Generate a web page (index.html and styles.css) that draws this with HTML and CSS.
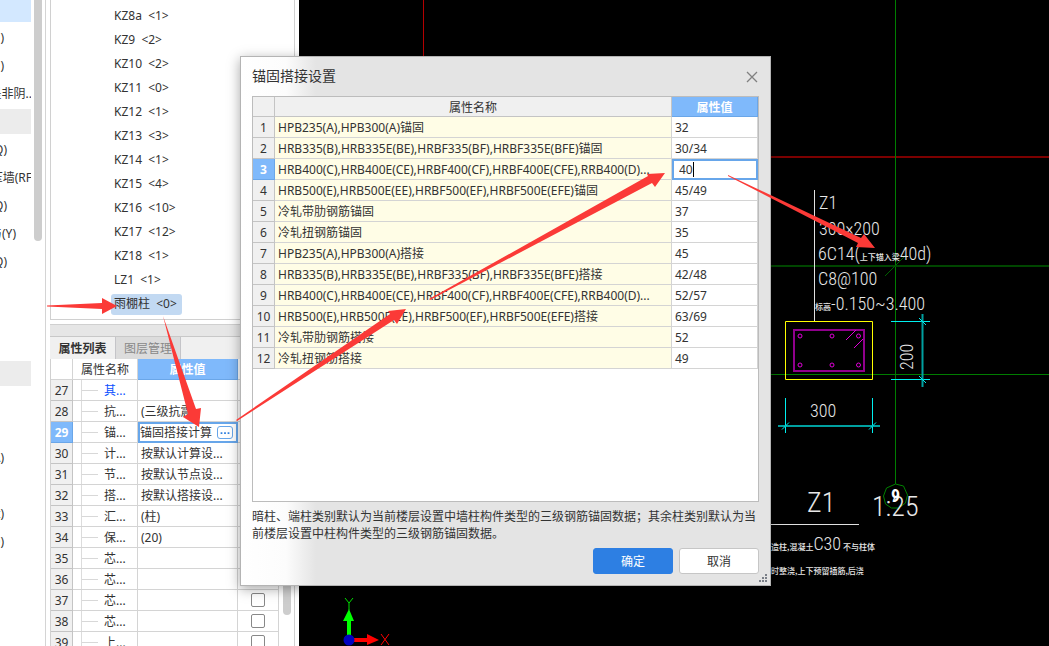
FILE: index.html
```html
<!DOCTYPE html>
<html lang="zh-CN">
<head>
<meta charset="utf-8">
<meta name="viewport" content="width=device-width, initial-scale=1">
<title>锚固搭接设置</title>
<link rel="stylesheet" href="styles.css">
</head>
<body>
<main class="app">
  <nav class="modules" aria-label="构件类型">
    <ul class="module-list">
      <li class="module active"></li>
      <li class="module cut-xs">)</li>
      <li class="module cut-xs">)</li>
      <li class="module cut-lg">是非阴..</li>
      <li class="module group"></li>
      <li class="module cut-sm">Q)</li>
      <li class="module cut-lg">压墙(RF</li>
      <li class="module cut-sm">Q)</li>
      <li class="module cut-md">与(Y)</li>
      <li class="module cut-sm">Q)</li>
      <li class="module"></li>
      <li class="module"></li>
      <li class="module"></li>
      <li class="module group"></li>
      <li class="module"></li>
      <li class="module"></li>
      <li class="module cut-xs">A)</li>
      <li class="module"></li>
      <li class="module cut-xs">t)</li>
      <li class="module cut-xs">O)</li>
    </ul>
    <div class="thumb"></div>
  </nav>

  <section class="side">
    <ul class="tree">
      <li><span>KZ8a&nbsp; &lt;1&gt;</span></li>
      <li><span>KZ9&nbsp; &lt;2&gt;</span></li>
      <li><span>KZ10&nbsp; &lt;2&gt;</span></li>
      <li><span>KZ11&nbsp; &lt;0&gt;</span></li>
      <li><span>KZ12&nbsp; &lt;1&gt;</span></li>
      <li><span>KZ13&nbsp; &lt;3&gt;</span></li>
      <li><span>KZ14&nbsp; &lt;1&gt;</span></li>
      <li><span>KZ15&nbsp; &lt;4&gt;</span></li>
      <li><span>KZ16&nbsp; &lt;10&gt;</span></li>
      <li><span>KZ17&nbsp; &lt;12&gt;</span></li>
      <li><span>KZ18&nbsp; &lt;1&gt;</span></li>
      <li><span>LZ1&nbsp; &lt;1&gt;</span></li>
      <li><span class="picked">雨棚柱&nbsp; &lt;0&gt;</span></li>
    </ul>
    <div class="splitter"></div>
    <div class="tabs">
      <button type="button" class="tab on">属性列表</button>
      <button type="button" class="tab">图层管理</button>
    </div>
    <div class="props-wrap">
      <table class="grid props">
        <colgroup><col class="p-num"><col class="p-name"><col class="p-val"><col></colgroup>
        <thead><tr><th></th><th>属性名称</th><th class="hot">属性值</th><th></th></tr></thead>
        <tbody>
          <tr><th>27</th><td class="leaf link">其...</td><td></td><td></td></tr>
          <tr><th>28</th><td class="leaf">抗...</td><td>(三级抗震)</td><td></td></tr>
          <tr><th class="hot">29</th><td class="leaf">锚...</td><td class="editing"><div class="pick">锚固搭接计算<button type="button" class="more" aria-label="更多"><svg viewBox="0 0 16 12" width="16" height="12"><path d="M3 5h2v2H3zM7 5h2v2H7zM11 5h2v2h-2z" fill="#2f80e0"/></svg></button></div></td><td></td></tr>
          <tr><th>30</th><td class="leaf">计...</td><td>按默认计算设...</td><td></td></tr>
          <tr><th>31</th><td class="leaf">节...</td><td>按默认节点设...</td><td></td></tr>
          <tr><th>32</th><td class="leaf">搭...</td><td>按默认搭接设...</td><td></td></tr>
          <tr><th>33</th><td class="leaf">汇...</td><td>(柱)</td><td></td></tr>
          <tr><th>34</th><td class="leaf">保...</td><td>(20)</td><td></td></tr>
          <tr><th>35</th><td class="leaf">芯...</td><td></td><td></td></tr>
          <tr><th>36</th><td class="leaf">芯...</td><td></td><td></td></tr>
          <tr><th>37</th><td class="leaf">芯...</td><td></td><td class="tick"><input type="checkbox" aria-label="37"></td></tr>
          <tr><th>38</th><td class="leaf">芯...</td><td></td><td class="tick"><input type="checkbox" aria-label="38"></td></tr>
          <tr><th>39</th><td class="leaf">上...</td><td></td><td class="tick"><input type="checkbox" aria-label="39"></td></tr>
        </tbody>
      </table>
      <div class="track"><div class="thumb"></div></div>
    </div>
  </section>

  <section class="cad" aria-label="绘图区">
    <svg class="drawing" width="750" height="646" viewBox="299 0 750 646">
      <g fill="none" stroke-width="1">
        <path d="M423.500 0V100" stroke="#b40000"/>
        <path d="M700 157H1049" stroke="#7c0000" stroke-width="2"/>
        <path d="M895.5 0V484M700 374.5H1049" stroke="#007d00"/>
        <path d="M700 266H1049" stroke="#004600" stroke-width="2"/>
        <path d="M885 276L906 255" stroke="#006000"/>
        <path d="M895.5 484l8 2 4 9-2 8-7 5h-7l-6-4-2-8 3-8z" stroke="#008200"/>
        <path d="M814.5 190V321M700 524.5H859" stroke="#e0e0e0"/>
        <path d="M785.5 321.5H872.500V379.5H785.5z" stroke="#ff0"/>
        <path d="M794 330H864V371H794z" stroke="#90008c" stroke-width="2"/>
        <g stroke="#e000d8">
          <circle cx="800" cy="336" r="2"/><circle cx="832" cy="336" r="2"/><circle cx="858.500" cy="336" r="2"/>
          <circle cx="800" cy="365" r="2"/><circle cx="832" cy="365" r="2"/><circle cx="858.500" cy="365" r="2"/>
          <path d="M846 340l10-10M854 348l9-9"/>
        </g>
        <path d="M891 321.500H930M891 379.500H930M785.500 398V433M872.500 398V433" stroke="#00f0f0"/>
        <path d="M922.500 314V387M778 426H880" stroke="#00a0a0" stroke-width="2"/>
        <path d="M919 318l7 7M919 376l7 7M782 429.500l7-7M869 429.500l7-7" stroke="#00f0f0"/>
      </g>
      <g class="cad-text">
        <text x="819" y="209">Z1</text>
        <text x="819" y="235">300×200</text>
        <text x="818" y="260">6C14(<tspan class="cjk">上下锚入梁</tspan>40d)</text>
        <text x="818" y="285">C8@100</text>
        <text x="815" y="310"><tspan class="cjk">标高</tspan>-0.150~3.400</text>
        <text x="810" y="417">300</text>
        <text transform="translate(913 370) rotate(-90)">200</text>
        <text class="big" x="807" y="512">Z1</text>
        <text class="big" x="872" y="516">1:25</text>
        <text class="axis" x="891" y="502">9</text>
        <text x="771" y="550"><tspan class="cjk">造柱,混凝土</tspan>C30<tspan class="cjk" dx="2">不与柱体</tspan></text>
        <text class="cjk" x="771" y="574">时整浇,上下预留插筋,后浇</text>
      </g>
      <path d="M347 640V621h-4l6-12 5 12h-3v19z" fill="#0f0"/>
      <path d="M353 638h14v-4l12 6-12 5v-3h-14z" fill="red"/>
      <circle cx="349" cy="640" r="5.500" fill="#0000c0"/>
      <path d="M345 598l4 5 4-5M349 603v7" stroke="#00e000" fill="none"/>
      <path d="M381 634l8 11M389 634l-8 11" stroke="red" fill="none"/>
    </svg>
  </section>
</main>

<div class="dialog" role="dialog" aria-labelledby="dlg-title">
  <header class="dlg-head">
    <h1 id="dlg-title">锚固搭接设置</h1>
    <button type="button" class="close" aria-label="关闭"><svg width="12" height="12" viewBox="0 0 12 12"><path d="M1 1l10 10M11 1L1 11" stroke="#808080" stroke-width="1.300" fill="none"/></svg></button>
  </header>
  <div class="sheet">
    <table class="grid anchors">
      <colgroup><col class="a-num"><col><col class="a-val"></colgroup>
      <thead><tr><th></th><th>属性名称</th><th class="hot">属性值</th></tr></thead>
      <tbody>
        <tr><th>1</th><td>HPB235(A),HPB300(A)锚固</td><td>32</td></tr>
        <tr><th>2</th><td>HRB335(B),HRB335E(BE),HRBF335(BF),HRBF335E(BFE)锚固</td><td>30/34</td></tr>
        <tr><th class="hot">3</th><td>HRB400(C),HRB400E(CE),HRBF400(CF),HRBF400E(CFE),RRB400(D)...</td><td class="editing"><div class="edit"><input type="text" value="40" aria-label="属性值"><i class="caret"></i></div></td></tr>
        <tr><th>4</th><td>HRB500(E),HRB500E(EE),HRBF500(EF),HRBF500E(EFE)锚固</td><td>45/49</td></tr>
        <tr><th>5</th><td>冷轧带肋钢筋锚固</td><td>37</td></tr>
        <tr><th>6</th><td>冷轧扭钢筋锚固</td><td>35</td></tr>
        <tr><th>7</th><td>HPB235(A),HPB300(A)搭接</td><td>45</td></tr>
        <tr><th>8</th><td>HRB335(B),HRB335E(BE),HRBF335(BF),HRBF335E(BFE)搭接</td><td>42/48</td></tr>
        <tr><th>9</th><td>HRB400(C),HRB400E(CE),HRBF400(CF),HRBF400E(CFE),RRB400(D)...</td><td>52/57</td></tr>
        <tr><th>10</th><td>HRB500(E),HRB500E(EE),HRBF500(EF),HRBF500E(EFE)搭接</td><td>63/69</td></tr>
        <tr><th>11</th><td>冷轧带肋钢筋搭接</td><td>52</td></tr>
        <tr><th>12</th><td>冷轧扭钢筋搭接</td><td>49</td></tr>
      </tbody>
    </table>
  </div>
  <p class="note">暗柱、端柱类别默认为当前楼层设置中墙柱构件类型的三级钢筋锚固数据；其余柱类别默认为当前楼层设置中柱构件类型的三级钢筋锚固数据。</p>
  <footer class="actions">
    <button type="button" class="btn primary">确定</button>
    <button type="button" class="btn">取消</button>
  </footer>
  <svg class="grip" width="9" height="9" viewBox="0 0 9 9"><path d="M6 0h2v2H6zM3 3h2v2H3zM6 3h2v2H6zM0 6h2v2H0zM3 6h2v2H3zM6 6h2v2H6z" fill="#7a7f88"/></svg>
</div>

<svg class="arrows" width="1049" height="646" viewBox="0 0 1049 646" aria-hidden="true">
  <g fill="#fb3a37">
    <path d="M47 305.500L102 303V298L117 306L102 314V309L47 306.500z"/>
    <path d="M163 316L196 409L201 408L199 427L183 417L188 414z"/>
    <path d="M236 420L390 314L388 311L406 309L397 324L394 320L237 421z"/>
    <path d="M429 299L648 176L647 174L665 173L655 187L652 183L430 300z"/>
    <path d="M728 175L861 238L864 234L875 248L856 247L858 243L728 176z"/>
  </g>
</svg>
</body>
</html>
```
FILE: styles.css
```css
* { box-sizing: border-box; }

body {
  margin: 0;
  height: 100vh;
  overflow: hidden;
  position: relative;
  background: #fff;
  color: #333;
  font: 12px/16px "Noto Sans", "Noto Sans CJK SC", sans-serif;
}

button, input { font: inherit; color: inherit; }
ul { list-style: none; margin: 0; padding: 0; }

.app { display: grid; grid-template-columns: 46px 253px 1fr; height: 100%; }

/* module list, scrolled sideways so only the label ends show */
.modules {
  display: flex;
  gap: 3px;
  border-right: 1px solid #d4d4d4;
  overflow: hidden;
}
.module-list { width: 31px; display: flex; flex-direction: column; gap: 3px; overflow: hidden; margin-top: -3px; flex: none; }
.module {
  height: 25px;
  flex: none;
  display: flex;
  align-items: center;
  justify-content: flex-end;
  white-space: nowrap;
}
.active { background: #d3e8ff; }
.group { background: #ececec; }
.cut-xs { width: 4px; }
.cut-sm { width: 7px; }
.cut-md { width: 16px; }
.cut-lg { width: 32px; }
.thumb { width: 8px; background: #cdcdcd; border-radius: 0 0 4px 4px; }
.modules .thumb { height: 241px; }

/* component tree and property list */
.side { display: flex; flex-direction: column; min-height: 0; overflow: hidden; padding: 0 4px 0 4px; }
.tree {
  border: 1px solid #d0d0d0;
  border-top: 0;
  padding: 4px 0 3px 60px;
  flex: none;
}
.tree li { height: 24px; display: flex; align-items: center; }
.tree span { padding: 2px 5px 2px 3px; border-radius: 3px; height: 21px; }
.tree .picked { background: #c2d9f2; }
.splitter { height: 12px; margin-top: 4px; background: #e6e6e6; border-top: 1px solid #d0d0d0; flex: none; }
.tabs { display: flex; height: 23px; background: #f0f0f0; border-top: 1px solid #c8c8c8; flex: none; }
.tab { border: 1px solid #c4c4c8; border-width: 0 1px 0 0; padding: 1px 0 0; width: 65px; background: #dcdcdc; color: #888; }
.tab.on { width: 66px; background: #f0f0f0; color: #333; font-weight: 700; }

.props-wrap { display: flex; flex: 1; min-height: 0; overflow: hidden; border-left: 1px solid #d0d0d0; border-right: 1px solid #d0d0d0; }
.track { flex: 1; display: flex; justify-content: center; align-items: flex-start; }
.track .thumb { height: 256px; }

.grid { table-layout: fixed; border-collapse: separate; border-spacing: 0; }
.grid th, .grid td {
  height: 21px;
  padding: 2px 3px 0;
  border: 1px solid #d4d4d4;
  border-width: 0 1px 1px 0;
  white-space: nowrap;
  overflow: hidden;
  line-height: 16px;
  text-align: left;
  font-weight: 400;
}
.grid thead th { text-align: center; }
.grid tbody th { background: #f0f0f0; border-color: #c4c4c4; text-align: center; padding: 2px 0 0; }
.grid .hot, .grid tbody .hot { background: #7fb9fb; color: #fff; font-weight: 700; border-color: #6aa6e8; }
.grid .editing { padding: 0; border: 2px solid #67a6ea; background: #fff; }

.props { width: 228px; flex: none; }
.p-num { width: 22px; }
.p-name { width: 65px; }
.p-val { width: 100px; }
.grid .leaf {
  padding-left: 31px;
  background:
    linear-gradient(#d8d8d8, #d8d8d8) 9px 10px / 16px 1px no-repeat,
    linear-gradient(#dcdcdc, #dcdcdc) 8px 0 / 1px 100% no-repeat;
}
.grid .link { color: #0a50ff; }
.pick { display: flex; align-items: center; gap: 5px; height: 17px; }
.more { width: 16px; height: 13px; padding: 0; border: 1px solid #67a6ea; border-radius: 3px; background: #fff; display: flex; align-items: center; justify-content: center; }
.grid .tick { padding: 0 0 0 13px; }
.tick input { appearance: none; display: block; width: 14px; height: 14px; margin: 0; border: 1px solid #888; border-radius: 2px; background: #fff; }

/* drawing area */
.cad { background: #000; overflow: hidden; min-width: 0; }
.drawing { display: block; }
.cad-text { fill: #e8e8e8; font-family: "Liberation Sans Narrow", "Roboto Condensed", "Noto Sans CJK SC", sans-serif; font-size: 18px; font-weight: 300; }
.cad-text .cjk { font-family: "Noto Sans CJK SC", sans-serif; font-size: 8px; font-weight: 500; }
.cad-text .big { font-size: 28px; }
.cad-text .axis { font-size: 18px; font-weight: 700; fill: #fff; }

/* settings dialog */
.dialog {
  position: absolute;
  left: 240px;
  top: 56px;
  width: 531px;
  padding: 0 11px 11px;
  border: 1px solid #b4b4b4;
  background: linear-gradient(90deg, #fff 0, #fcfcfc 45px, #e4e4e4 75px);
  box-shadow: 0 3px 12px rgba(0, 0, 0, .35);
}
.dlg-head { display: flex; justify-content: space-between; align-items: center; height: 39px; padding-right: 1px; }
.dlg-head h1 { margin: 0; font-size: 14px; line-height: 18px; padding-bottom: 2px; font-weight: 400; }
.close { border: 0; background: none; padding: 0; width: 12px; height: 12px; display: flex; }
.sheet { height: 406px; border: 1px solid #bcbcbc; background: #fff; }
.anchors { width: 100%; }
.a-num { width: 22px; }
.a-val { width: 86px; }
.anchors thead th { background: #f0f0f0; height: 20px; border-color: #c4c4c4; }
.anchors td:nth-child(2) { background: #fffde6; }
.edit { display: flex; align-items: center; height: 17px; padding-left: 5px; }
.edit input { width: 14px; height: 17px; border: 0; padding: 0; background: none; outline: 0; }
.caret { width: 1px; height: 15px; background: #000; }
.note { margin: 6px 0 0; line-height: 17px; }
.actions { display: flex; justify-content: flex-end; gap: 6px; margin-top: 6px; }
.btn { width: 80px; height: 26px; border: 1px solid #c6c6c6; border-radius: 3px; background: #fff; padding: 1px 0 0; }
.btn.primary { background: #2d7fe3; border-color: #2d7fe3; color: #fff; }
.grip { position: absolute; right: 2px; bottom: 2px; }

.arrows { position: absolute; left: 0; top: 0; pointer-events: none; }
```
